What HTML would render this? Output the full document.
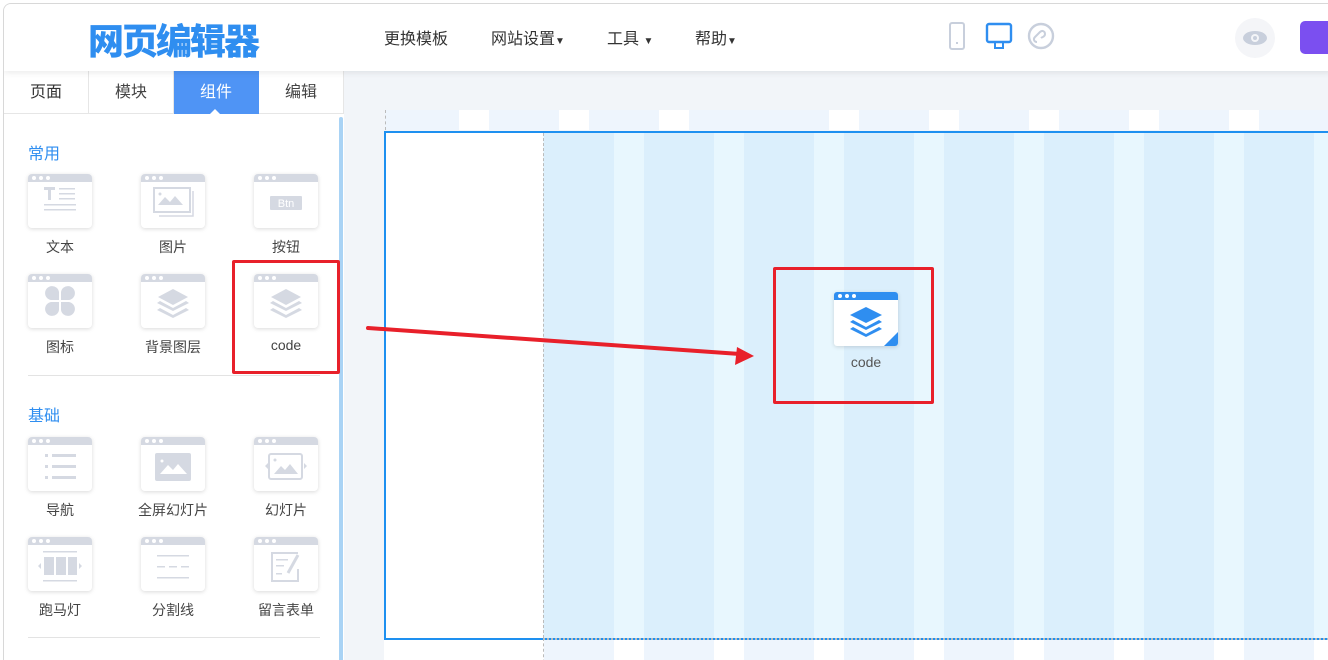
<!DOCTYPE html>
<html><head><meta charset="utf-8"><style>
*{margin:0;padding:0;box-sizing:border-box}
body{width:1328px;height:660px;overflow:hidden;background:#fff;font-family:"Liberation Sans","Noto Sans CJK SC",sans-serif;position:relative}
.abs{position:absolute}
.win{position:absolute;left:3px;top:3px;right:0;bottom:0;border-left:1px solid #d8d8d8;border-top:1px solid #d8d8d8;border-top-left-radius:8px;overflow:hidden;background:#f2f5f9}
.header{position:absolute;left:0;top:0;width:1328px;height:67px;background:#fff;box-shadow:0 2px 6px rgba(0,0,0,.08);z-index:5}
.logo{position:absolute;left:84px;top:9px;font-size:36px;font-weight:900;color:#2f8ef0;letter-spacing:-2px;font-family:"Noto Sans CJK SC",sans-serif}
.nav{position:absolute;top:21px;font-size:16px;color:#333}
.side{position:absolute;left:0;top:67px;width:340px;height:600px;background:#fff}
.tab{position:absolute;top:0;height:43px;width:85px;text-align:center;line-height:43px;font-size:16px;color:#333;border-right:1px solid #e6e6e6;border-bottom:1px solid #e6e6e6}
.sec{position:absolute;left:24px;font-size:16px;color:#2f8ef0}
.card{position:absolute;width:64px;height:54px;background:#fff;border-radius:4px;box-shadow:0 1px 4px rgba(0,0,0,.15);overflow:hidden}
.card .bar{height:8px;background:#d5d9e2;position:relative}
.card .bar i{position:absolute;top:2px;width:4px;height:4px;border-radius:2px;background:#fff}
.card svg{position:absolute;left:0;top:8px}
.lbl{position:absolute;width:100px;text-align:center;font-size:14px;color:#444}
</style></head><body>
<div class="win">
<div class="header">
 <div class="logo">网页编辑器</div>
 <div class="nav" style="left:380px">更换模板</div>
 <div class="nav" style="left:487px">网站设置<span style="font-size:10px">▼</span></div>
 <div class="nav" style="left:603px">工具 <span style="font-size:10px">▼</span></div>
 <div class="nav" style="left:691px">帮助<span style="font-size:10px">▼</span></div>
 <svg class="abs" style="left:940px;top:16px" width="120" height="34">
  <rect x="6" y="3" width="14" height="26" rx="2" fill="none" stroke="#c8cfdc" stroke-width="2"/>
  <rect x="12" y="22" width="2" height="2" fill="#c8cfdc"/>
  <rect x="43" y="4" width="24" height="18" rx="2" fill="none" stroke="#2f8ef0" stroke-width="2.4"/>
  <rect x="51" y="22" width="8" height="6" fill="none" stroke="#2f8ef0" stroke-width="2"/>
  <circle cx="97" cy="16" r="12" fill="none" stroke="#c8cfdc" stroke-width="2.4"/>
  <path d="M93 22c-3 0-4-3-2-5l5-5c2-2 5-1 5 2s-3 3-4 4" fill="none" stroke="#c8cfdc" stroke-width="2"/>
 </svg>
 <div class="abs" style="left:1231px;top:14px;width:40px;height:40px;border-radius:20px;background:#f4f5f8"></div>
 <svg class="abs" style="left:1238px;top:26px" width="26" height="16"><ellipse cx="13" cy="8" rx="12" ry="7" fill="#c8cfdc"/><circle cx="13" cy="8" r="4" fill="#f4f5f8"/><circle cx="13" cy="8" r="2" fill="#c8cfdc"/></svg>
 <div class="abs" style="left:1296px;top:17px;width:40px;height:33px;border-radius:5px;background:#7b4ff0"></div>
</div>

<div class="side">
 <div class="tab" style="left:0">页面</div>
 <div class="tab" style="left:85px;color:#444">模块</div>
 <div class="tab" style="left:170px;background:#4f94f5;color:#fff;border-color:#4f94f5">组件</div>
 <div class="abs" style="left:205px;top:38px;width:0;height:0;border-left:6px solid transparent;border-right:6px solid transparent;border-bottom:6px solid #fff"></div>
 <div class="tab" style="left:255px;color:#444">编辑</div>
 <div class="abs" style="left:335px;top:46px;width:4px;height:560px;background:#a9d3f5;border-radius:2px"></div>
 <div class="sec" style="top:69px">常用</div>
 <div class="abs" style="left:24px;top:304px;width:292px;height:1px;background:#e3e3e3"></div>
 <div class="sec" style="top:331px">基础</div>
 <div class="abs" style="left:24px;top:566px;width:292px;height:1px;background:#e3e3e3"></div>
</div>

<div class="abs" style="left:381px;top:106px;width:950px;height:20px;background:#eef5fd;border-left:1px dashed #bbb"></div>
<div class="abs" style="left:455px;top:106px;width:30px;height:20px;background:#fff"></div>
<div class="abs" style="left:555px;top:106px;width:30px;height:20px;background:#fff"></div>
<div class="abs" style="left:655px;top:106px;width:30px;height:20px;background:#fff"></div>
<div class="abs" style="left:825px;top:106px;width:30px;height:20px;background:#fff"></div>
<div class="abs" style="left:925px;top:106px;width:30px;height:20px;background:#fff"></div>
<div class="abs" style="left:1025px;top:106px;width:30px;height:20px;background:#fff"></div>
<div class="abs" style="left:1125px;top:106px;width:30px;height:20px;background:#fff"></div>
<div class="abs" style="left:1225px;top:106px;width:30px;height:20px;background:#fff"></div>
<div class="abs" style="left:380px;top:634px;width:160px;height:30px;background:#fff"></div>
<div class="abs" style="left:539px;top:634px;width:800px;height:30px;border-left:1px dashed #bbb;background:repeating-linear-gradient(90deg,#eef5fd 0 70px,#fff 70px 100px)"></div>
<div class="abs" style="left:380px;top:127px;width:950px;height:509px;border:2px solid #1e90f0;border-right:none;background:#fff"></div>
<div class="abs" style="left:539px;top:129px;width:790px;height:505px;border-left:1px dashed #bbb;background:repeating-linear-gradient(90deg,#dbeffc 0 70px,#e8f7fe 70px 100px)"></div>
<div class="abs" style="left:539px;top:634px;width:790px;height:3px;border-top:2px dotted #bbb"></div>

<div class="abs" style="left:769px;top:263px;width:161px;height:137px;border:3px solid #e8202a;border-radius:2px"></div>
<div class="abs" style="left:830px;top:288px;width:64px;height:54px;background:#fff;border-radius:3px;box-shadow:0 1px 4px rgba(0,0,0,.15);overflow:hidden">
 <div style="height:8px;background:#2f8ef0;position:relative"><i style="position:absolute;left:4px;top:2px;width:4px;height:4px;border-radius:2px;background:#fff"></i><i style="position:absolute;left:11px;top:2px;width:4px;height:4px;border-radius:2px;background:#fff"></i><i style="position:absolute;left:18px;top:2px;width:4px;height:4px;border-radius:2px;background:#fff"></i></div>
 <svg class="abs" style="left:0;top:8px" width="64" height="46"><path d="M32 7l16 8-16 8-16-8z" fill="#2f8ef0"/><path d="M19 20l13 7 13-7 3 2-16 8-16-8z" fill="#2f8ef0"/><path d="M19 27l13 7 13-7 3 2-16 8-16-8z" fill="#2f8ef0"/><path d="M64 32v14h-14z" fill="#2f8ef0"/></svg>
</div>
<div class="abs" style="left:812px;top:350px;width:100px;text-align:center;font-size:14px;color:#555">code</div>

<div class="abs" style="left:228px;top:256px;width:108px;height:114px;border:3px solid #e8202a;border-radius:2px;z-index:6"></div>

<svg class="abs" style="left:0;top:0;z-index:7" width="1328" height="660"><line x1="364" y1="324" x2="736" y2="350" stroke="#e8202a" stroke-width="4" stroke-linecap="round"/><path d="M750 352l-19 9 2-18z" fill="#e8202a"/></svg>
</div>

<div class="card" style="left:28px;top:174px"><div class="bar"><i style="left:4px"></i><i style="left:11px"></i><i style="left:18px"></i></div><svg width="64" height="46"><rect x="16" y="5" width="11" height="3" fill="#d5d9e2"/><rect x="20" y="5" width="3" height="13" fill="#d5d9e2"/><rect x="31" y="6" width="16" height="1.5" fill="#d5d9e2"/><rect x="31" y="11" width="16" height="1.5" fill="#d5d9e2"/><rect x="31" y="16" width="16" height="1.5" fill="#d5d9e2"/><rect x="16" y="22" width="32" height="1.5" fill="#d5d9e2"/><rect x="16" y="27" width="32" height="1.5" fill="#d5d9e2"/></svg></div>
<div class="lbl" style="left:10px;top:237px">文本</div>
<div class="card" style="left:141px;top:174px"><div class="bar"><i style="left:4px"></i><i style="left:11px"></i><i style="left:18px"></i></div><svg width="64" height="46"><rect x="13" y="6" width="36" height="24" fill="none" stroke="#d5d9e2" stroke-width="2"/><path d="M17 23l7-8 5 5 5-6 8 9z" fill="#d5d9e2"/><circle cx="19" cy="12" r="1.5" fill="#d5d9e2"/><path d="M52 9v25h-34" fill="none" stroke="#d5d9e2" stroke-width="1.5"/></svg></div>
<div class="lbl" style="left:123px;top:237px">图片</div>
<div class="card" style="left:254px;top:174px"><div class="bar"><i style="left:4px"></i><i style="left:11px"></i><i style="left:18px"></i></div><svg width="64" height="46"><rect x="16" y="14" width="32" height="14" rx="1" fill="#d5d9e2"/><text x="32" y="25" font-size="11" fill="#fff" text-anchor="middle" font-family="Liberation Sans">Btn</text></svg></div>
<div class="lbl" style="left:236px;top:237px">按钮</div>

<div class="card" style="left:28px;top:274px"><div class="bar"><i style="left:4px"></i><i style="left:11px"></i><i style="left:18px"></i></div><svg width="64" height="46"><path d="M31 18h-8a7 7 0 1 1 8-8z M33 18h8a7 7 0 1 0-8-8z M31 20h-8a7 7 0 1 0 8 8z M33 20h8a7 7 0 1 1-8 8z" fill="#d5d9e2"/></svg></div>
<div class="lbl" style="left:10px;top:337px">图标</div>
<div class="card" style="left:141px;top:274px"><div class="bar"><i style="left:4px"></i><i style="left:11px"></i><i style="left:18px"></i></div><svg width="64" height="46"><path d="M32 7l15 8-15 8-15-8z" fill="#d5d9e2"/><path d="M19 19l13 7 13-7 3 2-16 8-16-8z" fill="#d5d9e2"/><path d="M19 26l13 7 13-7 3 2-16 8-16-8z" fill="#d5d9e2"/></svg></div>
<div class="lbl" style="left:123px;top:337px">背景图层</div>
<div class="card" style="left:254px;top:274px"><div class="bar"><i style="left:4px"></i><i style="left:11px"></i><i style="left:18px"></i></div><svg width="64" height="46"><path d="M32 7l15 8-15 8-15-8z" fill="#d5d9e2"/><path d="M19 19l13 7 13-7 3 2-16 8-16-8z" fill="#d5d9e2"/><path d="M19 26l13 7 13-7 3 2-16 8-16-8z" fill="#d5d9e2"/></svg></div>
<div class="lbl" style="left:236px;top:337px">code</div>

<div class="card" style="left:28px;top:437px"><div class="bar"><i style="left:4px"></i><i style="left:11px"></i><i style="left:18px"></i></div><svg width="64" height="46"><rect x="17" y="9" width="3" height="3" fill="#d5d9e2"/><rect x="24" y="9" width="24" height="3" fill="#d5d9e2"/><rect x="17" y="20" width="3" height="3" fill="#d5d9e2"/><rect x="24" y="20" width="24" height="3" fill="#d5d9e2"/><rect x="17" y="31" width="3" height="3" fill="#d5d9e2"/><rect x="24" y="31" width="24" height="3" fill="#d5d9e2"/></svg></div>
<div class="lbl" style="left:10px;top:500px">导航</div>
<div class="card" style="left:141px;top:437px"><div class="bar"><i style="left:4px"></i><i style="left:11px"></i><i style="left:18px"></i></div><svg width="64" height="46"><rect x="14" y="8" width="36" height="28" rx="2" fill="#d5d9e2"/><path d="M19 29l8-9 5 5 5-6 9 10z" fill="#fff"/><circle cx="21" cy="16" r="1.5" fill="#fff"/></svg></div>
<div class="lbl" style="left:123px;top:500px">全屏幻灯片</div>
<div class="card" style="left:254px;top:437px"><div class="bar"><i style="left:4px"></i><i style="left:11px"></i><i style="left:18px"></i></div><svg width="64" height="46"><rect x="15" y="9" width="33" height="25" rx="2" fill="none" stroke="#d5d9e2" stroke-width="2"/><path d="M20 29l7-8 4 4 5-6 8 10z" fill="#d5d9e2"/><circle cx="21" cy="15" r="1.5" fill="#d5d9e2"/><path d="M11 21l3-3v6z M53 21l-3-3v6z" fill="#d5d9e2"/></svg></div>
<div class="lbl" style="left:236px;top:500px">幻灯片</div>

<div class="card" style="left:28px;top:537px"><div class="bar"><i style="left:4px"></i><i style="left:11px"></i><i style="left:18px"></i></div><svg width="64" height="46"><rect x="15" y="6" width="34" height="1.5" fill="#d5d9e2"/><rect x="16" y="12" width="10" height="18" fill="#d5d9e2"/><rect x="28" y="12" width="10" height="18" fill="#d5d9e2"/><rect x="40" y="12" width="9" height="18" fill="#d5d9e2"/><rect x="15" y="35" width="34" height="1.5" fill="#d5d9e2"/><path d="M10 21l3-3v6z M54 21l-3-3v6z" fill="#d5d9e2"/></svg></div>
<div class="lbl" style="left:10px;top:600px">跑马灯</div>
<div class="card" style="left:141px;top:537px"><div class="bar"><i style="left:4px"></i><i style="left:11px"></i><i style="left:18px"></i></div><svg width="64" height="46"><rect x="16" y="10" width="32" height="1.5" fill="#d5d9e2"/><rect x="16" y="21" width="8" height="1.5" fill="#d5d9e2"/><rect x="28" y="21" width="8" height="1.5" fill="#d5d9e2"/><rect x="40" y="21" width="8" height="1.5" fill="#d5d9e2"/><rect x="16" y="32" width="32" height="1.5" fill="#d5d9e2"/></svg></div>
<div class="lbl" style="left:123px;top:600px">分割线</div>
<div class="card" style="left:254px;top:537px"><div class="bar"><i style="left:4px"></i><i style="left:11px"></i><i style="left:18px"></i></div><svg width="64" height="46"><path d="M44 8h-26v28h26v-12" fill="none" stroke="#d5d9e2" stroke-width="2"/><rect x="22" y="14" width="12" height="1.5" fill="#d5d9e2"/><rect x="22" y="20" width="8" height="1.5" fill="#d5d9e2"/><rect x="22" y="28" width="6" height="1.5" fill="#d5d9e2"/><path d="M34 28l10-18" stroke="#d5d9e2" stroke-width="3"/></svg></div>
<div class="lbl" style="left:236px;top:600px">留言表单</div>
</body></html>
